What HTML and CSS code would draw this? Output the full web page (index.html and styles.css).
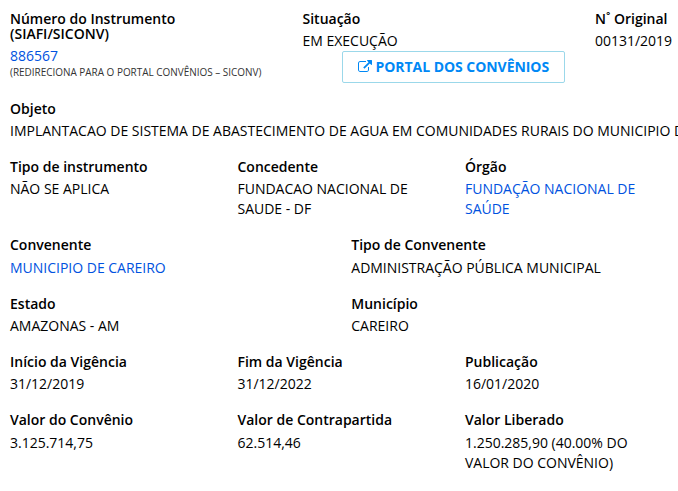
FILE: index.html
```
<!DOCTYPE html>
<html lang="pt-br">
<head>
    <meta charset="UTF-8">
    <meta name="viewport" content="width=device-width, initial-scale=1.0">
    <title>Detalhamento do Convênio</title>
    <link rel="stylesheet" href="styles.css">
</head>
<body>

    <!-- Dados do convênio -->
    <section class="dados-tabelados">

        <div class="row row-instrumento">
            <div class="campo">
                <strong class="titulo-duplo">Número do Instrumento<br>(SIAFI/SICONV)</strong>
                <a href="#">886567</a>
                <small>(REDIRECIONA PARA O PORTAL CONVÊNIOS – SICONV)</small>
            </div>
            <div class="campo">
                <strong>Situação</strong>
                <span>EM EXECUÇÃO</span>
                <a href="#" class="botao">
                    <svg class="icone" viewBox="0 0 1792 1792" aria-hidden="true">
                        <path d="M1408 928v320q0 119-84.500 203.500t-203.500 84.500h-832q-119 0-203.500-84.500t-84.500-203.500v-832q0-119 84.500-203.500t203.500-84.500h704q14 0 23 9t9 23v64q0 14-9 23t-23 9h-704q-66 0-113 47t-47 113v832q0 66 47 113t113 47h832q66 0 113-47t47-113v-320q0-14 9-23t23-9h64q14 0 23 9t9 23zm384-864v512q0 26-19 45t-45 19-45-19l-176-176-652 652q-10 10-23 10t-23-10l-114-114q-10-10-10-23t10-23l652-652-176-176q-19-19-19-45t19-45 45-19h512q26 0 45 19t19 45z"/>
                    </svg>
                    PORTAL DOS CONVÊNIOS
                </a>
            </div>
            <div class="campo">
                <strong>N˚ Original</strong>
                <span>00131/2019</span>
            </div>
        </div>

        <div class="row row-objeto">
            <div class="campo">
                <strong>Objeto</strong>
                <span>IMPLANTACAO DE SISTEMA DE ABASTECIMENTO DE AGUA EM COMUNIDADES RURAIS DO MUNICIPIO DE CAREIRO</span>
            </div>
        </div>

        <div class="row tres-colunas">
            <div class="campo">
                <strong>Tipo de instrumento</strong>
                <span>NÃO SE APLICA</span>
            </div>
            <div class="campo">
                <strong>Concedente</strong>
                <span>FUNDACAO NACIONAL DE SAUDE - DF</span>
            </div>
            <div class="campo">
                <strong>Órgão</strong>
                <a href="#">FUNDAÇÃO NACIONAL DE SAÚDE</a>
            </div>
        </div>

        <div class="row duas-colunas">
            <div class="campo">
                <strong>Convenente</strong>
                <a href="#">MUNICIPIO DE CAREIRO</a>
            </div>
            <div class="campo">
                <strong>Tipo de Convenente</strong>
                <span>ADMINISTRAÇÃO PÚBLICA MUNICIPAL</span>
            </div>
        </div>

        <div class="row duas-colunas">
            <div class="campo">
                <strong>Estado</strong>
                <span>AMAZONAS - AM</span>
            </div>
            <div class="campo">
                <strong>Município</strong>
                <span>CAREIRO</span>
            </div>
        </div>

        <div class="row tres-colunas">
            <div class="campo">
                <strong>Início da Vigência</strong>
                <span>31/12/2019</span>
            </div>
            <div class="campo">
                <strong>Fim da Vigência</strong>
                <span>31/12/2022</span>
            </div>
            <div class="campo">
                <strong>Publicação</strong>
                <span>16/01/2020</span>
            </div>
        </div>

        <div class="row tres-colunas">
            <div class="campo">
                <strong>Valor do Convênio</strong>
                <span>3.125.714,75</span>
            </div>
            <div class="campo">
                <strong>Valor de Contrapartida</strong>
                <span>62.514,46</span>
            </div>
            <div class="campo">
                <strong>Valor Liberado</strong>
                <span>1.250.285,90 (40.00% DO VALOR DO CONVÊNIO)</span>
            </div>
        </div>

    </section>

</body>
</html>
```
FILE: styles.css
```
/* General styling */
* {
    margin: 0;
    padding: 0;
    box-sizing: border-box;
}

body {
    background-color: #fff;
    color: #000;
    font-family: "Open Sans", sans-serif;
    font-size: 14px;
    line-height: 20px;
}

a {
    color: #0052e0;
    text-decoration: none;
}

/* Grid rows */
.dados-tabelados {
    padding: 9px 0 0 10px;
    overflow: hidden;
}

.row {
    display: grid;
    margin-bottom: 15.9px;
}

.row:last-child {
    margin-bottom: 0;
}

.row-instrumento {
    grid-template-columns: 292.5px 292.5px 1fr;
    height: 73.86px;
}

.tres-colunas {
    grid-template-columns: 227.5px 227.5px 190px;
}

.duas-colunas {
    grid-template-columns: 341.3px 1fr;
}

.row-objeto {
    white-space: nowrap;
}

/* Label and value */
.campo strong,
.campo > span,
.campo > a,
.campo small {
    display: block;
}

.campo strong {
    font-weight: 600;
    margin-bottom: 2.4px;
}

.campo > span,
.campo > a {
    letter-spacing: -0.01px;
}

.tres-colunas .campo {
    padding-right: 15px;
}

.campo .titulo-duplo {
    line-height: 15px;
    padding-top: 2px;
    margin-bottom: 5px;
}

.campo small {
    color: #333;
    font-size: 9.95px;
    line-height: 12px;
}

/* Portal button */
.campo .botao {
    display: flex;
    align-items: center;
    width: 223px;
    height: 32px;
    margin-left: 39px;
    padding-left: 15px;
    border: 1px solid #9bd8ea;
    border-radius: 2px;
    color: #0088f5;
    font-weight: 700;
    letter-spacing: -0.05px;
}

.icone {
    width: 14px;
    height: 14px;
    margin-right: 4px;
    fill: currentColor;
}
```
